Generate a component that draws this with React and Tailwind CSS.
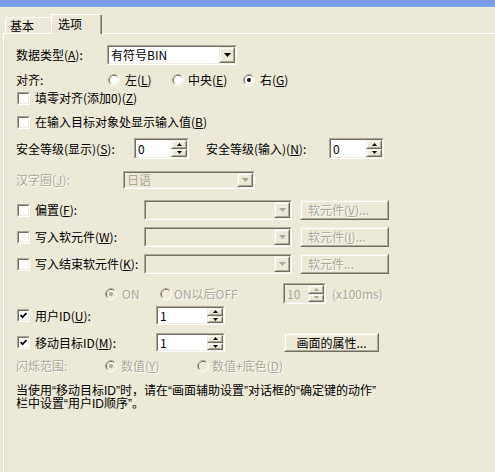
import React from "react";

function Sunken({ className, disabled, children }) {
  return (
    <div className={`border border-t-[#aca899] border-l-[#aca899] border-b-white border-r-white shrink-0 ${className}`}>
      <div
        className={`w-full h-full border border-t-[#716f64] border-l-[#716f64] border-b-[#f1efe2] border-r-[#f1efe2] flex items-center ${
          disabled ? "bg-[#ece9d8]" : "bg-white"
        }`}
      >
        {children}
      </div>
    </div>
  );
}

function Raised({ className, children }) {
  return (
    <div className={`border border-t-[#f1efe2] border-l-[#f1efe2] border-b-[#716f64] border-r-[#716f64] shrink-0 ${className}`}>
      <div className="w-full h-full border border-t-white border-l-white border-b-[#aca899] border-r-[#aca899] bg-[#ece9d8] flex items-center justify-center">
        {children}
      </div>
    </div>
  );
}

function DropBtn({ disabled }) {
  return (
    <Raised className="w-[16px] h-full">
      <svg width="7" height="4" viewBox="0 0 7 4">
        <path d="M0 0h7L3.5 4z" fill={disabled ? "#aca899" : "#000"} />
      </svg>
    </Raised>
  );
}

function Combo({ className, disabled, text }) {
  return (
    <Sunken className={className} disabled={disabled}>
      <div className={`flex-1 pl-[2px] leading-none ${disabled ? "text-[#aca899]" : "text-black"}`}>{text}</div>
      <DropBtn disabled={disabled} />
    </Sunken>
  );
}

function Spin({ className, disabled, value }) {
  return (
    <Sunken className={className} disabled={disabled}>
      <div className={`flex-1 pl-[2px] leading-none ${disabled ? "text-[#aca899]" : "text-black"}`}>{value}</div>
      <div className="flex flex-col h-full w-[16px]">
        <Raised className="w-full flex-1">
          <svg width="5" height="3" viewBox="0 0 5 3">
            <path d="M2.5 0L5 3H0z" fill={disabled ? "#aca899" : "#000"} />
          </svg>
        </Raised>
        <Raised className="w-full flex-1">
          <svg width="5" height="3" viewBox="0 0 5 3">
            <path d="M0 0h5L2.5 3z" fill={disabled ? "#aca899" : "#000"} />
          </svg>
        </Raised>
      </div>
    </Sunken>
  );
}

function Radio({ checked, disabled }) {
  return (
    <svg width="12" height="12" viewBox="0 0 12 12" className="shrink-0">
      <path d="M2.11 9.89 A5.5 5.5 0 0 1 9.89 2.11" fill="none" stroke="#aca899" />
      <path d="M9.89 2.11 A5.5 5.5 0 0 1 2.11 9.89" fill="none" stroke="#ffffff" />
      <path d="M2.82 9.18 A4.5 4.5 0 0 1 9.18 2.82" fill="none" stroke="#716f64" />
      <path d="M9.18 2.82 A4.5 4.5 0 0 1 2.82 9.18" fill="none" stroke="#f1efe2" />
      <circle cx="6" cy="6" r="4" fill={disabled ? "#ece9d8" : "#ffffff"} />
      {checked && <circle cx="6" cy="6" r="2" fill={disabled ? "#aca899" : "#000"} />}
    </svg>
  );
}

function Check({ checked }) {
  return (
    <div className="w-[13px] h-[13px] shrink-0 border border-t-[#aca899] border-l-[#aca899] border-b-white border-r-white">
      <div className="w-full h-full border border-t-[#716f64] border-l-[#716f64] border-b-[#f1efe2] border-r-[#f1efe2] bg-white flex items-center justify-center">
        {checked && (
          <svg width="7" height="7" viewBox="0 0 7 7">
            <path d="M0.6 3.2 L2.5 5.2 L6.5 1.2" fill="none" stroke="#000" strokeWidth="1.7" />
          </svg>
        )}
      </div>
    </div>
  );
}

const dis = "text-[#aca899] [text-shadow:1px_1px_0_#ffffff]";

export default function App() {
  return (
    <div className="w-[495px] h-[472px] bg-[#ece9d8] overflow-hidden font-['Noto_Sans_CJK_SC',sans-serif] text-[12px] leading-none text-black">
      <div className="h-[7px] bg-gradient-to-b from-[#7a96df] to-[#7ba8ee]" />
      {/* tabs */}
      <div className="flex items-end h-[26px] pl-[5px]">
        <div className="h-[16px] w-[46px] border-t border-l border-white flex items-center pl-[4px] rounded-tl-[2px]">
          基本
        </div>
        <div className="relative z-10 -mb-px h-[20px] w-[51px] bg-[#ece9d8] border-t border-l border-t-white border-l-white border-r border-r-[#716f64] shadow-[inset_-1px_0_0_#aca899] flex items-center pl-[6px] pb-[2px] rounded-t-[2px]">
          选项
        </div>
      </div>
      {/* panel */}
      <div className="ml-[3px] border-t border-l border-white h-[440px] flex flex-col">
        {/* Row A */}
        <div className="mt-[11px] h-[20px] flex items-center pl-[12px]">
          <div className="w-[91px]">数据类型(<u>A</u>):</div>
          <Combo className="w-[130px] h-[20px]" text="有符号BIN" />
        </div>
        {/* Row B */}
        <div className="mt-[7px] h-[16px] flex items-center pl-[12px]">
          <div className="w-[92px]">对齐:</div>
          <div className="w-[64px] flex items-center">
            <Radio />
            <span className="ml-[5px]">左(<u>L</u>)</span>
          </div>
          <div className="w-[71px] flex items-center">
            <Radio />
            <span className="ml-[4px]">中央(<u>E</u>)</span>
          </div>
          <div className="flex items-center">
            <Radio checked />
            <span className="ml-[5px]">右(<u>G</u>)</span>
          </div>
        </div>
        {/* Row C */}
        <div className="mt-[2px] h-[16px] flex items-center pl-[13px]">
          <Check />
          <span className="ml-[5px]">填零对齐(添加0)(<u>Z</u>)</span>
        </div>
        {/* Row D */}
        <div className="mt-[8px] h-[16px] flex items-center pl-[13px]">
          <Check />
          <span className="ml-[5px]">在输入目标对象处显示输入值(<u>B</u>)</span>
        </div>
        {/* Row E */}
        <div className="mt-[8px] h-[21px] flex items-center pl-[12px]">
          <div className="w-[118px]">安全等级(显示)(<u>S</u>):</div>
          <Spin className="w-[55px] h-[21px]" value="0" />
          <div className="ml-[17px] w-[123px]">安全等级(输入)(<u>N</u>):</div>
          <Spin className="w-[55px] h-[21px]" value="0" />
        </div>
        {/* Row F */}
        <div className="mt-[12px] h-[18px] flex items-center pl-[12px]">
          <div className={`w-[107px] ${dis}`}>汉字圈(<u>J</u>):</div>
          <Combo className="w-[132px] h-[18px]" disabled text="日语" />
        </div>
        {/* Row G */}
        <div className="mt-[11px] h-[20px] flex items-center pl-[13px]">
          <Check />
          <div className="ml-[5px] w-[109px]">偏置(<u>F</u>):</div>
          <Combo className="w-[148px] h-[20px]" disabled text="" />
          <Raised className="ml-[8px] w-[89px] h-[20px]">
            <span className={`w-full pl-[6px] ${dis}`}>软元件(<u>V</u>)...</span>
          </Raised>
        </div>
        {/* Row H */}
        <div className="mt-[7px] h-[20px] flex items-center pl-[13px]">
          <Check />
          <div className="ml-[5px] w-[109px]">写入软元件(<u>W</u>):</div>
          <Combo className="w-[148px] h-[20px]" disabled text="" />
          <Raised className="ml-[8px] w-[89px] h-[20px]">
            <span className={`w-full pl-[6px] ${dis}`}>软元件(<u>I</u>)...</span>
          </Raised>
        </div>
        {/* Row I */}
        <div className="mt-[7px] h-[20px] flex items-center pl-[13px]">
          <Check />
          <div className="ml-[5px] w-[109px] whitespace-nowrap">写入结束软元件(<u>K</u>):</div>
          <Combo className="w-[148px] h-[20px]" disabled text="" />
          <Raised className="ml-[8px] w-[89px] h-[20px]">
            <span className={`w-full pl-[6px] ${dis}`}>软元件...</span>
          </Raised>
        </div>
        {/* Row J */}
        <div className="mt-[9px] h-[21px] flex items-center pl-[12px]">
          <div className="w-[89px]" />
          <div className="w-[55px] flex items-center">
            <Radio checked disabled />
            <span className={`ml-[5px] ${dis}`}>ON</span>
          </div>
          <div className="w-[123px] flex items-center">
            <Radio disabled />
            <span className={`ml-[2px] ${dis}`}>ON以后OFF</span>
          </div>
          <Spin className="w-[43px] h-[21px]" disabled value="10" />
          <span className={`ml-[6px] ${dis}`}>(x100ms)</span>
        </div>
        {/* Row K */}
        <div className="mt-[2px] h-[19px] flex items-center pl-[13px]">
          <Check checked />
          <div className="ml-[5px] w-[121px]">用户ID(<u>U</u>):</div>
          <Spin className="w-[69px] h-[19px]" value="1" />
        </div>
        {/* Row L */}
        <div className="mt-[8px] h-[19px] flex items-center pl-[13px]">
          <Check checked />
          <div className="ml-[5px] w-[121px]">移动目标ID(<u>M</u>):</div>
          <Spin className="w-[69px] h-[19px]" value="1" />
          <Raised className="ml-[59px] w-[95px] h-[19px]">
            <span>画面的属性...</span>
          </Raised>
        </div>
        {/* Row M */}
        <div className="mt-[6px] h-[16px] flex items-center pl-[12px]">
          <div className={`w-[89px] ${dis}`}>闪烁范围:</div>
          <div className="w-[92px] flex items-center">
            <Radio checked disabled />
            <span className={`ml-[4px] ${dis}`}>数值(<u>Y</u>)</span>
          </div>
          <div className="flex items-center">
            <Radio disabled />
            <span className={`ml-[3px] ${dis}`}>数值+底色(<u>D</u>)</span>
          </div>
        </div>
        {/* Note */}
        <div className="mt-[11px] pl-[12px] leading-[13px] whitespace-nowrap font-['Liberation_Sans','Noto_Sans_CJK_SC',sans-serif]">
          <div>当使用“移动目标ID”时，请在“画面辅助设置”对话框的“确定键的动作”</div>
          <div>栏中设置“用户ID顺序”。</div>
        </div>
      </div>
    </div>
  );
}
